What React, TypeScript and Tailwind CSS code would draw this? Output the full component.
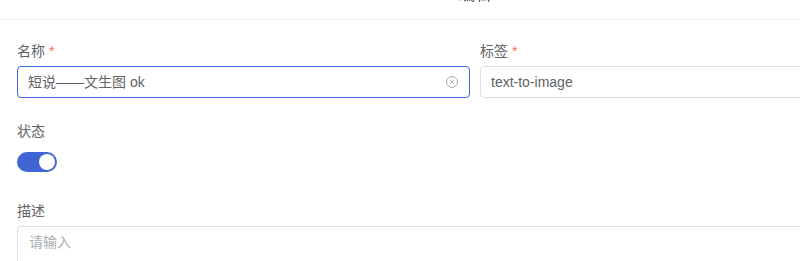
const Label = ({ text, required }: { text: string; required?: boolean }) => (
  <div className="h-[22px] leading-[22px] mb-1 text-[14px] text-[#606266]">
    {text}
    {required && <span className="ml-1 text-[#f56c6c]">*</span>}
  </div>
);

const ClearIcon = () => (
  <svg width="12" height="12" viewBox="0 0 12 12" fill="none" stroke="#a8abb2" strokeWidth="1">
    <circle cx="6" cy="6" r="5.5" />
    <path d="M4.2 4.2 L7.8 7.8 M7.8 4.2 L4.2 7.8" />
  </svg>
);

export default function App() {
  return (
    <div
      className="w-full h-[261px] overflow-hidden bg-white"
      style={{ fontFamily: '"Liberation Sans", "Noto Sans CJK SC", sans-serif' }}
    >
      <div className="w-[950px]">
        <div className="h-[20px] border-b border-[#f0f0f0] flex justify-center overflow-hidden">
          <span className="-mt-[15px] text-[16px] leading-[20px] text-[#303133]">编辑</span>
        </div>

        <div className="px-[17px] pt-[20px]">
          <div className="grid grid-cols-2 gap-x-[10px]">
            <div className="mb-[22px]">
              <Label text="名称" required />
              <div className="h-[32px] flex items-center rounded-[4px] border border-[#4064d9] px-[10px]">
                <span className="flex-1 text-[14px] text-[#606266]">短说——文生图 ok</span>
                <span className="mr-[1px]">
                  <ClearIcon />
                </span>
              </div>
            </div>
            <div className="mb-[22px]">
              <Label text="标签" required />
              <div className="h-[32px] flex items-center rounded-[4px] border border-[#dcdfe6] px-[10px]">
                <span className="text-[14px] text-[#606266]">text-to-image</span>
              </div>
            </div>
          </div>

          <div className="mb-[22px]">
            <Label text="状态" />
            <div className="h-[32px] flex items-center">
              <div className="w-[40px] h-[20px] rounded-full bg-[#4066d6] flex items-center justify-end px-[2px]">
                <div className="w-[16px] h-[16px] rounded-full bg-white" />
              </div>
            </div>
          </div>

          <div>
            <Label text="描述" />
            <div className="h-[60px] rounded-[4px] border border-[#dcdfe6] px-[11px] pt-[3px]">
              <span className="text-[14px] leading-[22px] text-[#a8abb2]">请输入</span>
            </div>
          </div>
        </div>
      </div>
    </div>
  );
}
